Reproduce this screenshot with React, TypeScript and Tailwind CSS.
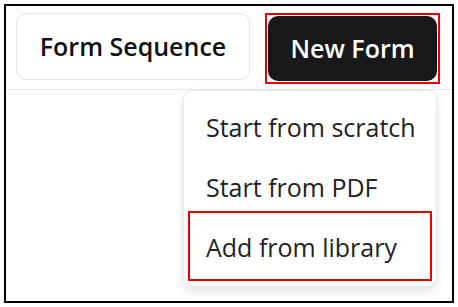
export default function App() {
  return (
    <div className="w-[458px] h-[307px] bg-white p-1" style={{ fontFamily: '"Open Sans", "Noto Sans", sans-serif' }}>
      <div className="relative w-[450px] h-[299px] border-2 border-black bg-white overflow-hidden">
        <div className="flex items-start gap-[15px] pl-[10px] pt-[7px] h-[84px] border-b border-[#e6e6e6]">
          <button className="w-[234px] h-[67px] rounded-[10px] border border-[#e5e5e5] bg-white text-[25px] font-semibold text-[#111]">
            Form Sequence
          </button>
          <div className="border-2 border-[#e60000] p-px">
            <button className="w-[169px] h-[65px] rounded-[10px] bg-[#18181b] text-[25px] font-semibold text-white">
              New Form
            </button>
          </div>
        </div>
        <div className="absolute left-[177px] top-[84px] w-[254px] h-[197px] rounded-[10px] border border-[#ebebeb] bg-white shadow-[0_4px_10px_rgba(0,0,0,0.12)] pt-[7px] px-[4px] flex flex-col">
          <div className="shrink-0 h-[60px] flex items-center pl-[18px] text-[25px] text-[#222]">Start from scratch</div>
          <div className="shrink-0 h-[60px] flex items-center pl-[18px] text-[25px] text-[#222]">Start from PDF</div>
          <div className="shrink-0 -mt-[7px] h-[70px] flex items-center pl-[16px] pt-[3px] text-[25px] text-[#222] border-2 border-[#e60000]">Add from library</div>
        </div>
      </div>
    </div>
  );
}
